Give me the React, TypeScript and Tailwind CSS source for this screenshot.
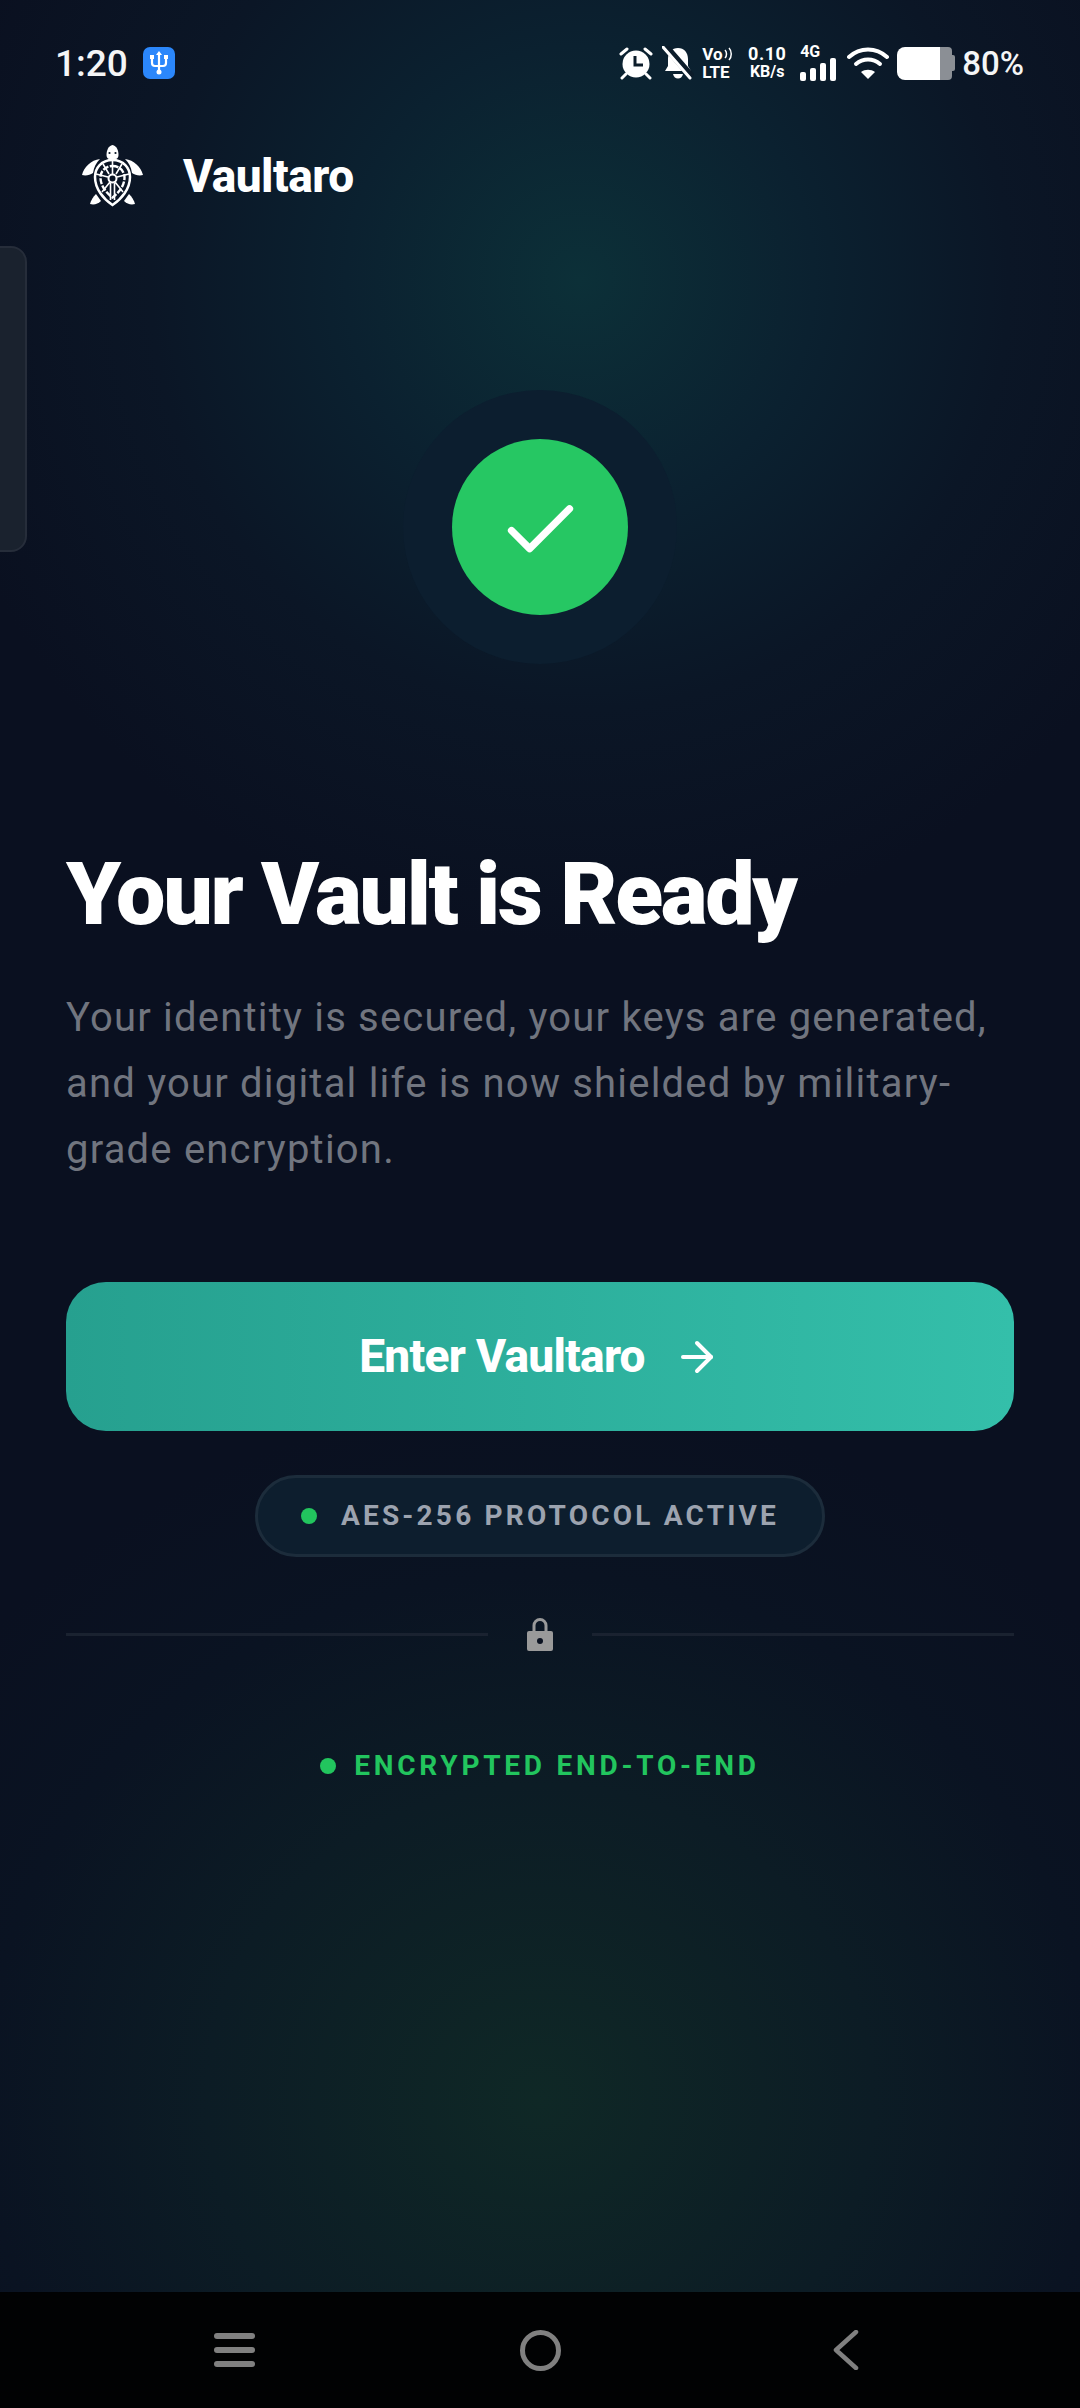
import { ArrowRight, Check } from "lucide-react";

// Small status bar glyphs drawn by hand, the icon packs have no close match
function AlarmIcon() {
  return (
    <svg width="34" height="34" viewBox="0 0 34 34" className="shrink-0">
      <circle cx="17" cy="18" r="13.500" fill="#fff" />
      <path d="M16 10v9h8" fill="none" stroke="#0c1c2a" strokeWidth="3" />
      <path d="M2 8 8 3M32 8l-6-5M7 28l-4 4M27 28l4 4" stroke="#fff" strokeWidth="3" strokeLinecap="round" />
    </svg>
  );
}

function BellOffIcon() {
  return (
    <svg width="32" height="34" viewBox="0 0 32 34" className="shrink-0">
      <path d="M16 2c6 0 10 4.500 10 11v7l3 5H3l3-5v-7C6 6.500 10 2 16 2Z" fill="#fff" />
      <path d="M11 28h10c-.8 3-2.500 4.500-5 4.500S11.800 31 11 28Z" fill="#fff" />
      <path d="M4 1l26 30" stroke="#0c1c2a" strokeWidth="7" />
      <path d="M1 1l27 31" stroke="#fff" strokeWidth="3" strokeLinecap="round" />
    </svg>
  );
}

function VoWaves() {
  return (
    <svg width="8" height="14" viewBox="0 0 8 14" fill="none" className="ml-[1px]">
      <path d="M1 3c2 2 2 6 0 8M5 1c3 3 3 9 0 12" stroke="#fff" strokeWidth="1.500" />
    </svg>
  );
}

function SignalIcon() {
  return (
    <svg width="38" height="24" viewBox="0 0 38 24" className="block">
      <rect x="0" y="14" width="6" height="9" rx="2" fill="#fff" />
      <rect x="10" y="10" width="6" height="13" rx="2" fill="#fff" />
      <rect x="20" y="5" width="6" height="18" rx="2" fill="#fff" />
      <rect x="30" y="0" width="6" height="23" rx="2" fill="#fff" />
    </svg>
  );
}

function WifiIcon() {
  return (
    <svg width="42" height="34" viewBox="0 0 42 34" className="shrink-0">
      <path d="M2 11C13 1 29 1 40 11" fill="none" stroke="#fff" strokeWidth="4" strokeLinecap="round" />
      <path d="M9 18c7-6 17-6 24 0" fill="none" stroke="#fff" strokeWidth="4" strokeLinecap="round" />
      <path d="M21 33l-7-7c4-3 10-3 14 0Z" fill="#fff" />
    </svg>
  );
}

function UsbIcon() {
  return (
    <svg width="22" height="24" viewBox="0 0 22 24">
      <path d="M11 2v19M4 7v5c0 2 1 3 3 3h8c2 0 3-1 3-3V7" fill="none" stroke="#fff" strokeWidth="2.200" />
      <path d="M11 0l3 4H8Z" fill="#fff" />
      <circle cx="11" cy="21" r="2.500" fill="#fff" />
      <rect x="2" y="4" width="4" height="4" fill="#fff" />
      <rect x="16" y="4" width="4" height="4" fill="#fff" />
    </svg>
  );
}

function TurtleLogo() {
  return (
    <svg width="62" height="62" viewBox="0 0 62 62" className="shrink-0">
      {/* head and flippers */}
      <path d="M30.500 0c4 1 6 5 6 10 0 2-1 4-3 4h-6c-2 0-3-2-3-4 0-5 2-9 6-10Z" fill="#fff" />
      <circle cx="27.500" cy="8" r="1.100" fill="#0b1726" />
      <circle cx="33.500" cy="8" r="1.100" fill="#0b1726" />
      <path d="M18 14C9 15 2 22 0 30c4 1 8 0 11-2 1-6 3-10 7-14Z" fill="#fff" />
      <path d="M43 14c9 1 16 8 18 16-4 1-8 0-11-2-1-6-3-10-7-14Z" fill="#fff" />
      <path d="M14 49c-3 3-5 6-6 10 4 1 8 0 11-3Z" fill="#fff" />
      <path d="M47 49c3 3 5 6 6 10-4 1-8 0-11-3Z" fill="#fff" />
      {/* shell */}
      <path
        d="M30.500 15c11 0 17.500 8 17.500 17 0 12-8.500 22-17.500 28-9-6-17.500-16-17.500-28 0-9 6.500-17 17.500-17Z"
        fill="none"
        stroke="#fff"
        strokeWidth="2.500"
      />
      <path
        d="M30.500 21c7 0 12 5 12 11.500 0 8.500-6 15.500-12 20-6-4.500-12-11.500-12-20C18.500 26 23.500 21 30.500 21Z"
        fill="none"
        stroke="#fff"
        strokeWidth="2.400"
        strokeDasharray="6 1.500"
      />
      <circle cx="30.500" cy="33.500" r="4" fill="none" stroke="#fff" strokeWidth="2" />
      <path
        d="M30.500 15v14M21 19l6 10M40 19l-6 10M14 29l12 3M47 29l-12 3M20 47l8-10M41 47l-8-10M28.500 38v17M32.500 38v17"
        stroke="#fff"
        strokeWidth="1.600"
      />
    </svg>
  );
}

function LockGlyph() {
  return (
    <svg width="26" height="33" viewBox="0 0 26 33" className="mx-[39px] shrink-0">
      <path d="M7 14V7.500a6 6 0 0 1 12 0V14" fill="none" stroke="#9a9a9a" strokeWidth="3" />
      <rect x="0" y="13" width="26" height="20" rx="2" fill="#9a9a9a" />
      <circle cx="13" cy="23" r="3" fill="#0a1120" />
    </svg>
  );
}

export default function App() {
  return (
    <div className="relative flex h-[2408px] w-[1080px] flex-col overflow-hidden bg-[#0a1020] font-['Roboto',sans-serif] text-white">
      {/* Glows behind the content */}
      <div className="absolute left-[-200px] top-[-500px] h-[1560px] w-[1560px] bg-[radial-gradient(closest-side,#0c3038_0%,#0b2130_30%,#0b1626_55%,rgba(10,16,32,0)_85%)]" />
      <div className="absolute left-[-200px] top-[1400px] h-[1400px] w-[1480px] bg-[radial-gradient(closest-side,#0f2826_0%,#0c1c25_45%,#0a1322_75%,rgba(10,16,32,0)_100%)]" />

      {/* Tab sticking out of the left edge */}
      <div className="absolute left-[-4px] top-[246px] h-[306px] w-[31px] rounded-r-[16px] border-2 border-[#262d3a] bg-[#1a222e]" />

      <div className="relative flex flex-1 flex-col">
        {/* Status bar */}
        <div className="flex h-[126px] items-center justify-between pl-[55px] pr-[56px]">
          <div className="flex items-center gap-[15px]">
            <span className="text-[37px] font-medium leading-none text-[#f4f5f6]">1:20</span>
            <span className="flex h-[32px] w-[32px] items-center justify-center rounded-[7px] bg-[#2b87fb]">
              <UsbIcon />
            </span>
          </div>
          <div className="flex items-center">
            <AlarmIcon />
            <div className="ml-[9px]">
              <BellOffIcon />
            </div>
            <div className="ml-[8px] flex w-[32px] flex-col items-start text-[17px] font-bold leading-[18px]">
              <span className="flex items-center">
                Vo
                <VoWaves />
              </span>
              <span>LTE</span>
            </div>
            <div className="ml-[13px] flex w-[40px] flex-col items-center font-bold leading-[18px]">
              <span className="text-[18px] tracking-[0.5px]">0.10</span>
              <span className="text-[16px]">KB/s</span>
            </div>
            <div className="ml-[13px] flex flex-col items-start">
              <span className="text-[16px] font-bold leading-[13px]">4G</span>
              <SignalIcon />
            </div>
            <div className="ml-[9px]">
              <WifiIcon />
            </div>
            <div className="ml-[8px] flex h-[33px] w-[58px] items-center">
              <div className="h-full w-[43px] rounded-l-[8px] bg-white" />
              <div className="h-full w-[12px] rounded-r-[4px] bg-[#8b8f95]" />
              <div className="h-[16px] w-[3px] rounded-r-[2px] bg-[#8b8f95]" />
            </div>
            <span className="ml-[7px] text-[33px] font-medium leading-none text-[#f4f5f6]">80%</span>
          </div>
        </div>

        {/* Logo row */}
        <div className="flex h-[100px] items-center gap-[39px] pl-[82px]">
          <TurtleLogo />
          <span className="text-[46px] font-extrabold leading-none tracking-[-0.5px]">Vaultaro</span>
        </div>

        {/* Success badge */}
        <div className="mt-[164px] flex h-[274px] w-[274px] items-center justify-center self-center rounded-full bg-[#0c1e2f]">
          <div className="flex h-[176px] w-[176px] items-center justify-center rounded-full bg-[#26c763]">
            <Check size={87} strokeWidth={2} className="mt-[6px] text-white" />
          </div>
        </div>

        <div className="mt-[180px] px-[66px]">
          <h1 className="text-[88px] font-black leading-[100px] tracking-[-2.350px]">Your Vault is Ready</h1>
          <p className="mt-[41px] text-[40px] leading-[66px] tracking-[1.2px] text-[#71757f]">
            Your identity is secured, your keys are generated, and your digital life is now shielded by military-grade
            encryption.
          </p>

          <button className="mt-[99px] flex h-[149px] w-full items-center justify-center gap-[28px] rounded-[40px] bg-gradient-to-r from-[#26a08f] to-[#34bfaa] text-[46px] font-extrabold">
            <span className="tracking-[-0.7px]">Enter Vaultaro</span>
            <ArrowRight size={48} strokeWidth={2} />
          </button>

          <div className="mx-auto mt-[44px] flex h-[82px] w-[570px] items-center justify-center gap-[24px] rounded-full border-[3px] border-[#1c2c3b] bg-[#0d1e2e]">
            <span className="h-[16px] w-[16px] rounded-full bg-[#22c55e]" />
            <span className="text-[28px] font-bold leading-none tracking-[3.2px] text-[#9ca3af]">
              AES-256 PROTOCOL ACTIVE
            </span>
          </div>

          <div className="mt-[55px] flex h-[44px] items-center">
            <div className="h-[3px] flex-1 bg-[#1a2230]" />
            <LockGlyph />
            <div className="h-[3px] flex-1 bg-[#1a2230]" />
          </div>

          <div className="mt-[96px] flex items-center justify-center gap-[18px]">
            <span className="h-[16px] w-[16px] rounded-full bg-[#22c55e]" />
            <span className="text-[28px] font-bold leading-none tracking-[3.750px] text-[#22c55e]">
              ENCRYPTED END-TO-END
            </span>
          </div>
        </div>
      </div>

      {/* Android nav bar */}
      <div className="relative flex h-[116px] items-center bg-[#010203] pl-[214px]">
        <div className="flex w-[41px] flex-col gap-[8px]">
          <div className="h-[6px] rounded-full bg-[#808080]" />
          <div className="h-[6px] rounded-full bg-[#808080]" />
          <div className="h-[6px] rounded-full bg-[#808080]" />
        </div>
        <div className="ml-[265px] h-[41px] w-[41px] rounded-full border-[5px] border-[#808080]" />
        <svg width="26" height="40" viewBox="0 0 26 40" fill="none" className="ml-[272px]">
          <path d="M23 2 3 20l20 18" stroke="#808080" strokeWidth="4.500" strokeLinecap="round" strokeLinejoin="round" />
        </svg>
      </div>
    </div>
  );
}
